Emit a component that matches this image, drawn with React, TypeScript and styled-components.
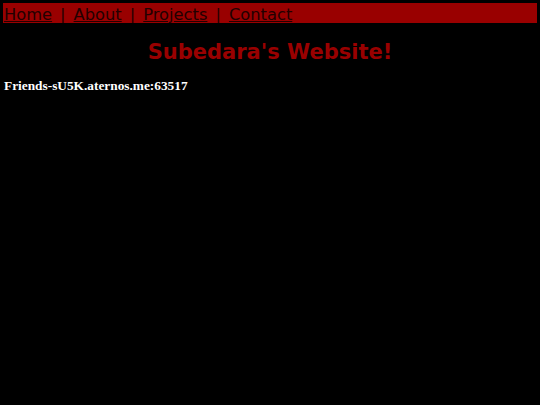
import React from "react";
import styled, { createGlobalStyle } from "styled-components";

const GlobalStyle = createGlobalStyle`
    html, body {
        margin: 0;
        padding: 0;
        background: #000000;
    }

    body {
        padding: 3px;
    }
`;

const links = ["Home", "About", "Projects", "Contact"];

const App = () => {
    return (
        <>
            <GlobalStyle />
            <Nav.Bar>
                {links.map((label, i) => (
                    <React.Fragment key={label}>
                        {i > 0 && <Nav.Sep>|</Nav.Sep>}
                        <Nav.Link href="#">{label}</Nav.Link>
                    </React.Fragment>
                ))}
            </Nav.Bar>

            <Title>Subedara's Website!</Title>

            <Address>Friends-sU5K.aternos.me:63517</Address>
        </>
    );
};

export default App;

const Nav = {
    Bar: styled.nav`
        background: #990000;
        height: 20px;
        padding: 0 1px;

        font-family: "DejaVu Sans", Verdana, sans-serif;
        font-size: 16.3px;
        line-height: 23px;
        color: #220000;
        white-space: nowrap;
        overflow: hidden;
    `,

    Link: styled.a`
        color: #220000;
        text-decoration: underline;
    `,

    Sep: styled.span`
        margin: 0 8px;
        color: #220000;
    `,
};

const Title = styled.h1`
    margin: 17px 0 0;

    text-align: center;
    font-family: "DejaVu Sans", Verdana, sans-serif;
    font-weight: 700;
    font-size: 21px;
    color: #990000;
`;

const Address = styled.p`
    margin: 14px 0 0 1px;

    font-family: "Liberation Serif", "Times New Roman", serif;
    font-weight: 700;
    font-size: 13.33px;
    color: #ffffff;
`;
